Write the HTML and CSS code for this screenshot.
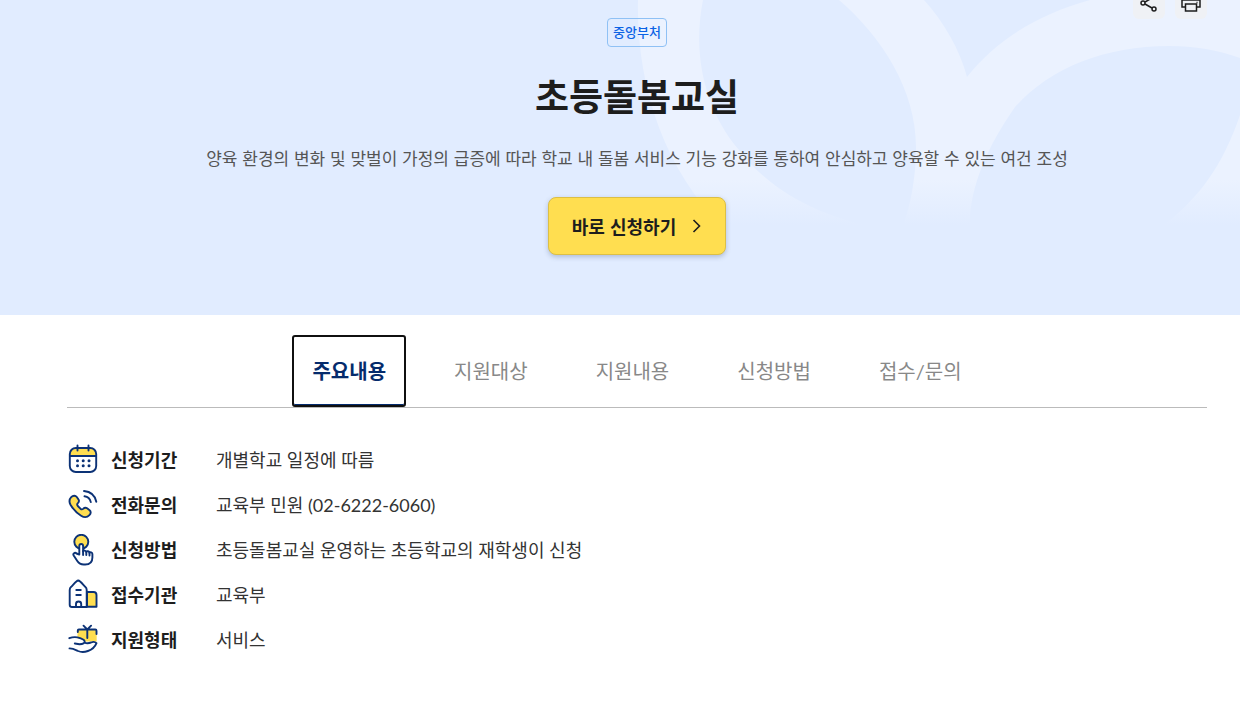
FILE: index.html
```html
<!DOCTYPE html>
<html lang="ko">
<head>
<meta charset="utf-8">
<title>초등돌봄교실</title>
<link rel="stylesheet" href="styles.css">
</head>
<body>
<header class="hero">
  <svg class="hero-art" viewBox="0 0 620 230" aria-hidden="true">
    <defs>
      <linearGradient id="fade" x1="0" y1="0" x2="0" y2="1">
        <stop offset="0.78" stop-color="#ebf2ff"/>
        <stop offset="0.98" stop-color="#ebf2ff" stop-opacity="0"/>
      </linearGradient>
    </defs>
    <path fill="url(#fade)" fill-rule="evenodd" d="M18 0C16 80 42 170 106 230H620V0H470C420 14 378 38 347 77C340 50 324 22 304 0ZM83 0C72 55 85 110 119 150C153 195 208 219 260 228L281 230C290 210 296 178 296 147C296 90 262 37 219 0ZM350 230C348 190 367 147 395 107C430 68 485 46 549 46C575 46 598 50 620 58V115C603 165 579 200 537 230Z"/>
  </svg>
  <div class="tools">
    <button class="tool" type="button" aria-label="공유">
      <svg width="20" height="20" viewBox="0 0 20 20" fill="none" stroke="#1d1d1d" stroke-width="1.5"><circle cx="15" cy="4" r="2"/><circle cx="4" cy="10" r="2"/><circle cx="15" cy="16" r="2"/><path d="M6 9l7-4M6 11l7 4"/></svg>
    </button>
    <button class="tool" type="button" aria-label="인쇄">
      <svg width="20" height="20" viewBox="0 0 20 20" fill="none" stroke="#1d1d1d" stroke-width="1.5"><path d="M4.500 7V2h11v5M4.500 14H1V7h18v7h-3.500M4.500 11h11v7h-11z"/><path d="M15.500 9.500h1"/></svg>
    </button>
  </div>
  <span class="badge">중앙부처</span>
  <h1 class="title">초등돌봄교실</h1>
  <p class="summary">양육 환경의 변화 및 맞벌이 가정의 급증에 따라 학교 내 돌봄 서비스 기능 강화를 통하여 안심하고 양육할 수 있는 여건 조성</p>
  <button class="apply" type="button">바로 신청하기
    <svg width="10" height="14" viewBox="0 0 10 14" fill="none" stroke="#1d1d1d" stroke-width="1.600"><path d="M1.500 1l6 6-6 6"/></svg>
  </button>
</header>
<main class="content">
  <nav class="tabs">
    <a class="tab tab-active" href="#main">주요내용</a>
    <a class="tab" href="#target">지원대상</a>
    <a class="tab" href="#support">지원내용</a>
    <a class="tab" href="#method">신청방법</a>
    <a class="tab" href="#contact">접수/문의</a>
  </nav>
  <dl class="facts" id="main">
    <div class="fact">
      <svg class="icon" viewBox="0 0 32 32"><path class="sun" d="M3 12V9q0-5 5-5h16q5 0 5 5v3z"/><rect x="2.800" y="4" width="26.400" height="24" rx="6"/><path d="M3 12h26M10.500 1.500v5M21.500 1.500v5"/><g class="dots"><circle cx="10.500" cy="16.700" r="1.500"/><circle cx="16.200" cy="16.700" r="1.500"/><circle cx="22" cy="16.700" r="1.500"/><circle cx="10.500" cy="21.800" r="1.500"/><circle cx="16.200" cy="21.800" r="1.500"/><circle cx="22" cy="21.800" r="1.500"/></g></svg>
      <dt>신청기간</dt><dd>개별학교 일정에 따름</dd>
    </div>
    <div class="fact">
      <svg class="icon" viewBox="0 0 32 32"><path class="sun outlined" d="M4.200 8.200C6 6.300 8.500 6.300 9.800 8l1.700 2.600c1 1.600.3 2.800-.8 3.800-.8.800-.6 1.700.1 2.600l2.600 2.700c1 .8 1.800 1 2.700.2 1.200-1.200 2.500-1.600 4-.6l2.500 1.900c1.500 1.300 1.500 3.200-.2 4.900-2.300 2.500-5.200 2.600-8.300.6C9.700 24 6.300 20.500 3.500 15.700c-1.500-2.800-1.200-5.500.7-7.500z"/><path d="M17 2c6.500.5 11 4.500 12.300 10.800M17.500 7.300c3.300.5 5.500 2.500 6.300 5.800"/></svg>
      <dt>전화문의</dt><dd>교육부 민원 (02-6222-6060)</dd>
    </div>
    <div class="fact">
      <svg class="icon" viewBox="0 0 32 32"><circle class="sun outlined" cx="14.300" cy="7.800" r="7"/><path class="paper" d="M12.300 20.500V12c0-2.600 3.800-2.600 3.800 0v5.500c.3-1.400 3-1.200 3.200.5.500-1.200 3-1 3.200.8.700-1 2.900-.6 2.900 1.200v3.500c0 4.500-2.800 7-7.200 7h-1.500c-3 0-5-1.300-6.400-3.500l-3.600-5.500c-1.200-2 1.200-3.500 2.800-2z"/><path d="M16.100 17v4M19.300 18v3M22.500 19v2.500"/></svg>
      <dt>신청방법</dt><dd>초등돌봄교실 운영하는 초등학교의 재학생이 신청</dd>
    </div>
    <div class="fact">
      <svg class="icon" viewBox="0 0 32 32"><path class="sun outlined" d="M20 13h6.500q3 0 3 3v11.800H20z"/><path class="paper" d="M5 28q-2.300 0-2.300-2.300V11q0-2 1.500-3.200C7 5 9 1.800 11.200 1.500c2.200.3 4.300 3.500 7 6.300Q19.700 9 19.700 11v17z"/><path d="M9.300 11h4.500M9.300 16h4.500M9 28v-3q0-2.500 2.600-2.500t2.600 2.500v3"/></svg>
      <dt>접수기관</dt><dd>교육부</dd>
    </div>
    <div class="fact">
      <svg class="icon" viewBox="0 0 32 32"><path class="sun" d="M10.500 6.500q0-1 1-1h17.500q.7 0 .7 1V17.500H17.500l-3.500-3h-3.500z"/><path d="M10.800 8V6.500q0-1 1-1h16.500q1.200 0 1.200 1.200V10M20.300 5.500v8.500M20.300 5.500l-3.800-3.800M20.300 5.500l3.800-3.800"/><path d="M2.300 14.200c4-1.500 7.700-1.300 10.700 0 2 1 4.200.8 4.700 3 .3 2-1.700 2.900-5.200 3l-4.700-.7M17.500 18.500c2.500 1.300 4.500.8 6.500 0 2-.9 4.200-.7 5.500.6-1.500 3.800-4.500 6.500-8.600 7.900-3.500 1.200-6.600 1.400-9.800 0-2.800-1.300-5.300-2.700-8.600-2.600"/></svg>
      <dt>지원형태</dt><dd>서비스</dd>
    </div>
  </dl>
</main>
</body>
</html>
```
FILE: styles.css
```css
* { box-sizing: border-box; }
body {
  margin: 0;
  background: #fff;
  color: #1d1d1d;
  font-family: Lato, "Noto Sans CJK KR", sans-serif;
  font-size: 18px;
  line-height: 27px;
}
.hero {
  position: relative;
  display: flex;
  flex-direction: column;
  align-items: center;
  padding: 18px 33px 60px 67px;
  background: #e1ecff;
  overflow: hidden;
}
.hero-art {
  position: absolute;
  top: 0;
  right: 0;
  width: 620px;
  height: 230px;
}
.tools {
  position: absolute;
  top: -13px;
  right: 33px;
  display: flex;
  gap: 10px;
}
.tool {
  display: flex;
  align-items: center;
  justify-content: center;
  width: 32px;
  height: 32px;
  padding: 0;
  border: 0;
  border-radius: 6px;
  background: #eff1f5;
}
.badge, .title, .summary, .apply { position: relative; }
.badge {
  padding: 0 5px;
  border: 1px solid #8fc1f5;
  border-radius: 4px;
  color: #0b63e5;
  font-size: 13px;
  font-weight: 500;
  line-height: 27px;
}
.title {
  margin: 24px 0 0;
  font-size: 37px;
  font-weight: 700;
  line-height: 52px;
}
.summary {
  margin: 21px 0 0;
  color: #555;
  font-family: "Noto Sans CJK KR", sans-serif;
  font-size: 17px;
  text-align: center;
}
.apply {
  display: flex;
  align-items: center;
  gap: 16px;
  height: 58px;
  margin-top: 26px;
  padding: 0 23px;
  border: 1px solid #dcbf45;
  border-radius: 8px;
  background: #ffde50;
  box-shadow: 0 2px 5px rgba(60, 80, 120, 0.3);
  color: #1d1d1d;
  font-family: "Noto Sans CJK KR", sans-serif;
  font-size: 18px;
  font-weight: 700;
}
.content { padding: 20px 33px 48px 67px; }
.tabs {
  display: flex;
  justify-content: center;
  gap: 28px;
  border-bottom: 1px solid #bbb;
}
.tab {
  padding: 20px 18px;
  border: 2px solid transparent;
  color: #888;
  font-size: 20px;
  line-height: 28px;
  text-decoration: none;
}
.tab-active {
  border-color: #101010;
  border-radius: 3px;
  box-shadow: inset 0 -1px #052b6c;
  color: #052b6c;
  font-weight: 700;
}
.facts {
  display: grid;
  gap: 13px;
  margin: 36px 0 0;
}
.fact {
  display: grid;
  grid-template-columns: 32px 93px 1fr;
  column-gap: 12px;
  align-items: center;
}
.fact dt { font-weight: 700; }
.fact dd { margin: 0; color: #333; }
.icon {
  width: 32px;
  height: 32px;
  fill: none;
  stroke: #0c3276;
  stroke-width: 1.9;
  stroke-linecap: round;
  stroke-linejoin: round;
}
.icon .sun { fill: #ffde50; stroke: none; }
.icon .outlined { stroke: #0c3276; }
.icon .paper { fill: #fff; }
.icon .dots { fill: #0c3276; stroke: none; }
```
